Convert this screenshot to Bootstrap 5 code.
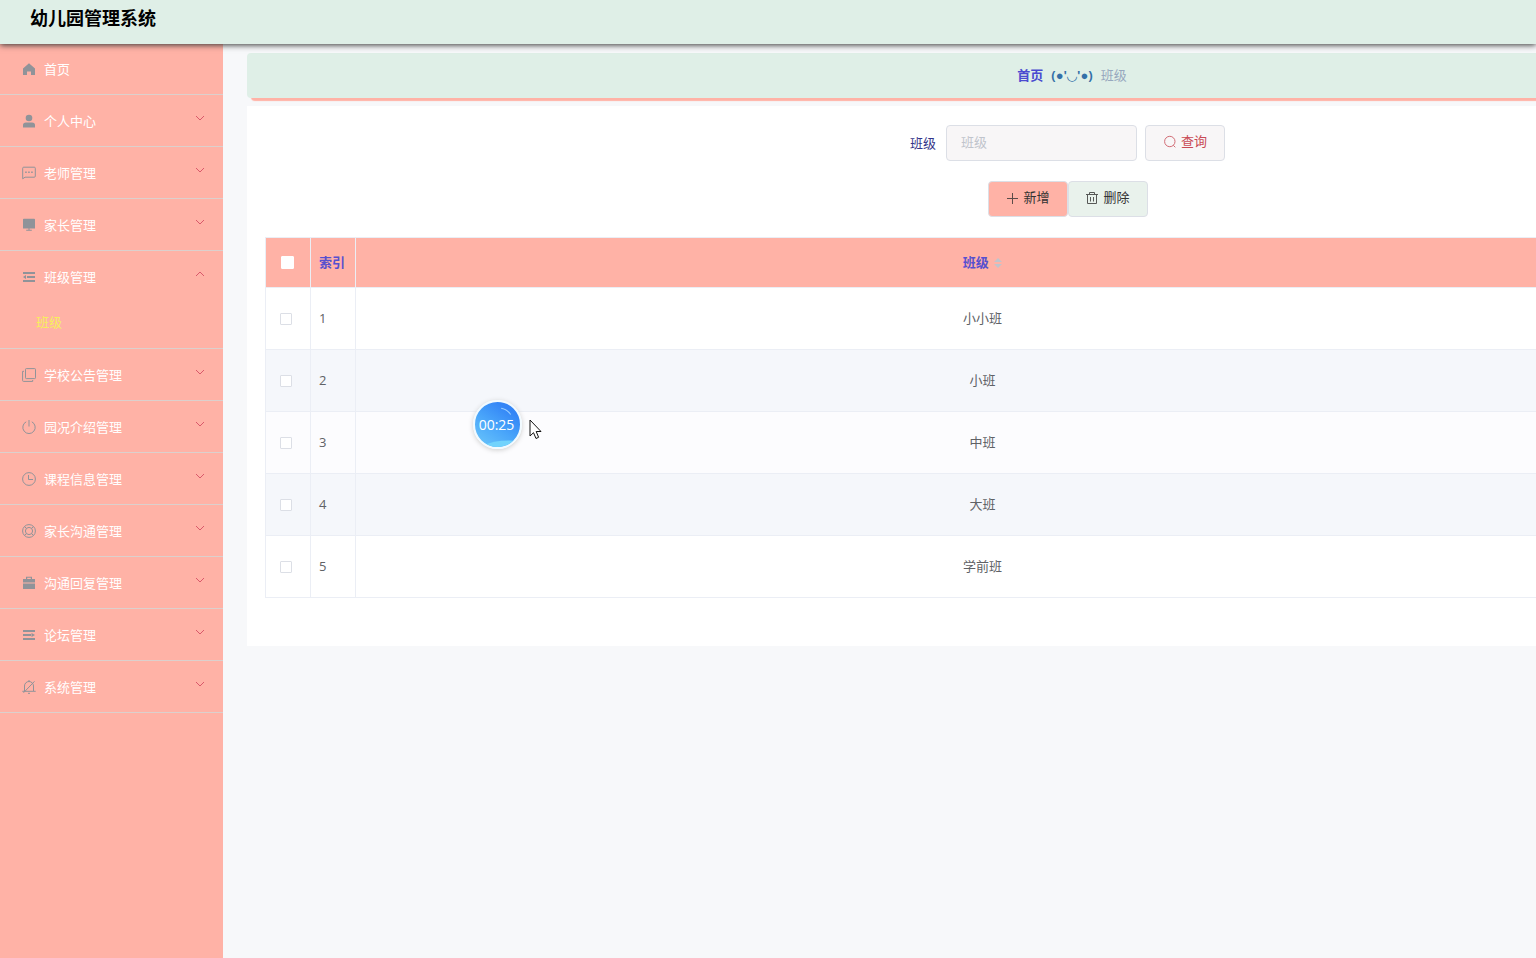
<!DOCTYPE html>
<html lang="zh-CN">
<head>
<meta charset="utf-8">
<meta name="viewport" content="width=device-width, initial-scale=1">
<title>幼儿园管理系统</title>
<link href="https://cdn.jsdelivr.net/npm/bootstrap@5.3.0/dist/css/bootstrap.min.css" rel="stylesheet">
<style>
  :root { --salmon: #ffb2a6; --mint: #dfefe7; --line: #ebeef5; }
  body { font-family: "Open Sans", "Noto Sans CJK SC", sans-serif; font-size: 13px; line-height: 20px; color: #606266; background: #f7f8fa; }
  a { text-decoration: none; }
  .topbar { height: 44px; padding: 4px 30px 12px; background: var(--mint); box-shadow: 0 1px 6px #333; z-index: 2; }
  .topbar h1 { font-size: 18px; line-height: 28px; color: #000; }
  .side { width: 223px; background: var(--salmon); }
  .side li { border-bottom: 1px solid #dcd0cd; }
  .side-link { height: 51px; padding: 0 18px 0 22px; gap: 8px; color: #fff; }
  .side li:first-child .side-link { height: 50px; }
  .side-link .chev { margin: 0 0 5px auto; color: #d9596a; }
  .sub-link { height: 46px; padding: 10px 36px; color: #f6ef5c; }
  .ico { width: 14px; height: 14px; color: #909399; flex: none; fill: none; stroke: currentColor; stroke-width: 1; }
  .ico .solid { fill: currentColor; stroke: none; }
  .chev { width: 10px; height: 10px; fill: none; stroke: currentColor; flex: none; }
  .content-area { min-width: 0; padding: 9px 0 0 24px; }
  /* the work area is wider than the viewport */
  .wide { width: calc(127% + 4px); }
  .crumbs { height: 45px; padding: 0 0 2px 9px; background: var(--mint); border-radius: 4px; box-shadow: 4px 3px 1px var(--salmon); font-weight: 700; gap: 8px; }
  .crumbs a { color: #4a4ad0; }
  .crumbs .face { color: #3470a8; font-family: "Open Sans", "Liberation Sans", "DejaVu Sans", sans-serif; }
  .crumbs .here { color: #97a8be; font-weight: 400; }
  .panel { margin-top: 8px; padding: 19px 18px 48px; background: #fff; }
  .panel label { color: #333389; margin-right: 10px; }
  .search { width: 191px; height: 36px; padding: 0 14px 2px; font-size: 13px; background: #f8f6f7; border-color: #dcdfe6; border-radius: 4px; }
  .search::placeholder { color: #c0c4cc; }
  .tool { width: 80px; height: 36px; padding: 0 0 2px; font-size: 13px; border: 1px solid #dcdfe6; border-radius: 4px; gap: 4px; }
  .tool .ico { color: inherit; opacity: .8; }
  .query { background: #f8f6f7; color: #c94a55; }
  .add { background: var(--salmon); color: #333; }
  .del { background: #e9f2ec; color: #333; }
  .grid-wrap { padding-right: 260px; }
  .grid { table-layout: fixed; border: 1px solid var(--line); }
  .grid th, .grid td { border: 1px solid var(--line); padding: 0 8px 2px; }
  .grid th { height: 50px; background: var(--salmon); color: #5650cf; font-weight: 700; }
  .grid td { height: 62px; }
  .grid .narrow { width: 45px; }
  .grid .name { text-align: center; }
  .grid tbody tr:nth-child(even) { background: #f5f7fb; }
  .grid tbody tr:nth-child(3) { background: #fcfcfe; }
  .grid .form-check-input { width: 12px; height: 12px; margin: 2px 6px 0; border: 1px solid #dcdfe6; border-radius: 1px; display: block; }
  .grid th .form-check-input { width: 13px; height: 13px; margin: 2px 7px 0; border-color: #fff; }
  .sorter { width: 8px; height: 12px; fill: #c0c4cc; margin-left: 2px; }
  .timer { left: 473px; top: 400px; width: 49px; height: 49px; border: 2px solid #f1faff; box-shadow: 0 1px 5px #ccc; background: linear-gradient(35deg, #6cc8fa, #4aa6fa 45%, #3385f6 80%); color: #fff; font-size: 14px; z-index: 3; overflow: hidden; }
  .timer svg { inset: 0; }
  .timer span { margin-right: 2px; }
  .pointer { left: 529px; top: 419px; z-index: 3; }
</style>
</head>
<body class="d-flex flex-column min-vh-100">
<header class="topbar position-relative"><h1 class="m-0 fw-bold">幼儿园管理系统</h1></header>
<div class="d-flex flex-grow-1">
  <nav class="side flex-shrink-0" aria-label="主菜单">
    <ul class="list-unstyled m-0">
      <li><a href="#" class="side-link d-flex align-items-center"><svg class="ico" viewBox="0 0 14 14"><path class="solid" d="M7 1.2 1 6.4V13h4V9.5h4V13h4V6.4z"/></svg>首页</a></li>
      <li><a href="#" class="side-link d-flex align-items-center"><svg class="ico" viewBox="0 0 14 14"><circle class="solid" cx="7" cy="4" r="3.3"/><path class="solid" d="M1 13.5V11q0-2.5 3-2.5h6q3 0 3 2.5v2.5z"/></svg>个人中心<svg class="chev" viewBox="0 0 10 10"><path d="m1 3 4 4 4-4"/></svg></a></li>
      <li><a href="#" class="side-link d-flex align-items-center"><svg class="ico" viewBox="0 0 14 14"><path d="M.7 12.8V2.2q0-1 1-1h10.6q1 0 1 1v8q0 1-1 1H3z"/><path class="solid" d="M3.2 5.5h1.5V7H3.2zm3 0h1.5V7H6.2zm3 0h1.5V7H9.2z"/></svg>老师管理<svg class="chev" viewBox="0 0 10 10"><path d="m1 3 4 4 4-4"/></svg></a></li>
      <li><a href="#" class="side-link d-flex align-items-center"><svg class="ico" viewBox="0 0 14 14"><path class="solid" d="M1 1.5q0-.8.8-.8h10.4q.8 0 .8.8V10.5H1zM6.5 10h1v1.8h2.3v1H4.2v-1h2.3z"/></svg>家长管理<svg class="chev" viewBox="0 0 10 10"><path d="m1 3 4 4 4-4"/></svg></a></li>
      <li><a href="#" class="side-link d-flex align-items-center"><svg class="ico" viewBox="0 0 14 14"><path class="solid" d="M1 2h12v2H1zm4 4h8v2H5zM1 10h12v2H1zM1 7l3-2v4z"/></svg>班级管理<svg class="chev" viewBox="0 0 10 10"><path d="m1 7 4-4 4 4"/></svg></a>
        <a href="#" class="sub-link d-block">班级</a></li>
      <li><a href="#" class="side-link d-flex align-items-center"><svg class="ico" viewBox="0 0 14 14"><rect x="3.5" y=".6" width="10" height="10" rx=".8"/><path d="M2 3.3H.6v9.2q0 .9.9.9h9.2V12"/></svg>学校公告管理<svg class="chev" viewBox="0 0 10 10"><path d="m1 3 4 4 4-4"/></svg></a></li>
      <li><a href="#" class="side-link d-flex align-items-center"><svg class="ico" viewBox="0 0 14 14"><path d="M4.2 1.8a6.2 6.2 0 1 0 5.6 0M7 0v6.5"/></svg>园况介绍管理<svg class="chev" viewBox="0 0 10 10"><path d="m1 3 4 4 4-4"/></svg></a></li>
      <li><a href="#" class="side-link d-flex align-items-center"><svg class="ico" viewBox="0 0 14 14"><circle cx="7" cy="7" r="6.4"/><path d="M6.5 3v4.5H11"/></svg>课程信息管理<svg class="chev" viewBox="0 0 10 10"><path d="m1 3 4 4 4-4"/></svg></a></li>
      <li><a href="#" class="side-link d-flex align-items-center"><svg class="ico" viewBox="0 0 14 14"><circle cx="7" cy="7" r="6.4"/><circle cx="7" cy="7" r="3.6"/><path d="m2.6 2.6 1.8 1.8m5.2 0 1.8-1.8M2.6 11.4l1.8-1.8m5.2 0 1.8 1.8"/></svg>家长沟通管理<svg class="chev" viewBox="0 0 10 10"><path d="m1 3 4 4 4-4"/></svg></a></li>
      <li><a href="#" class="side-link d-flex align-items-center"><svg class="ico" viewBox="0 0 14 14"><path class="solid" d="M1 3h3V.7h6V3h3v3.5H1zm4.2 0h3.6V1.8H5.2zM1 7.5h12V13H1z"/></svg>沟通回复管理<svg class="chev" viewBox="0 0 10 10"><path d="m1 3 4 4 4-4"/></svg></a></li>
      <li><a href="#" class="side-link d-flex align-items-center"><svg class="ico" viewBox="0 0 14 14"><path class="solid" d="M1 2h12v2H1zm0 4h8v2H1zm0 4h12v2H1zM13 7l-3.5-2v4z"/></svg>论坛管理<svg class="chev" viewBox="0 0 10 10"><path d="m1 3 4 4 4-4"/></svg></a></li>
      <li><a href="#" class="side-link d-flex align-items-center"><svg class="ico" viewBox="0 0 14 14"><path d="M2.5 11V6a4.5 4.5 0 0 1 9 0v5M.3 11.3h13.4M6 13.3h2M7 0v1.5M1.5 12.8l11-11.5"/></svg>系统管理<svg class="chev" viewBox="0 0 10 10"><path d="m1 3 4 4 4-4"/></svg></a></li>
    </ul>
  </nav>
  <main class="content-area flex-grow-1 overflow-hidden">
    <div class="wide">
      <nav class="crumbs d-flex align-items-center justify-content-center" aria-label="路径">
        <a href="#">首页</a><span class="face">(●'◡'●)</span><span class="here">班级</span>
      </nav>
      <section class="panel">
        <form class="d-flex justify-content-center align-items-center">
          <label for="className">班级</label>
          <input id="className" type="text" class="form-control search" placeholder="班级">
          <button type="button" class="btn tool query ms-2 d-flex align-items-center justify-content-center"><svg class="ico" viewBox="0 0 14 14"><circle cx="6.8" cy="6.5" r="5.2"/><path d="m10.3 10.3 2 2"/></svg>查询</button>
        </form>
        <div class="d-flex justify-content-center my-3 py-1">
          <button type="button" class="btn tool add d-flex align-items-center justify-content-center"><svg class="ico" viewBox="0 0 14 14"><path d="M7.5 2v11M2 7.5h11"/></svg>新增</button>
          <button type="button" class="btn tool del d-flex align-items-center justify-content-center"><svg class="ico" viewBox="0 0 14 14"><path d="M1 3.5h12M4.5 3.5v-2h5v2M2.5 3.5v9h9v-9M5.5 6v4.5M8.5 6v4.5"/></svg>删除</button>
        </div>
        <div class="grid-wrap">
          <table class="grid w-100">
            <thead><tr>
              <th class="narrow"><input type="checkbox" class="form-check-input" aria-label="全选"></th>
              <th class="narrow">索引</th>
              <th class="name">班级 <svg class="sorter" viewBox="0 0 8 12"><path d="m4 1 4 4H0zM0 7h8l-4 4z"/></svg></th>
            </tr></thead>
            <tbody>
              <tr><td><input type="checkbox" class="form-check-input" aria-label="选择小小班"></td><td>1</td><td class="name">小小班</td></tr>
              <tr><td><input type="checkbox" class="form-check-input" aria-label="选择小班"></td><td>2</td><td class="name">小班</td></tr>
              <tr><td><input type="checkbox" class="form-check-input" aria-label="选择中班"></td><td>3</td><td class="name">中班</td></tr>
              <tr><td><input type="checkbox" class="form-check-input" aria-label="选择大班"></td><td>4</td><td class="name">大班</td></tr>
              <tr><td><input type="checkbox" class="form-check-input" aria-label="选择学前班"></td><td>5</td><td class="name">学前班</td></tr>
            </tbody>
          </table>
        </div>
      </section>
    </div>
  </main>
</div>
<div class="timer position-absolute rounded-circle d-flex align-items-center justify-content-center">
  <svg class="position-absolute" viewBox="0 0 43 43"><path d="M8 42q10-6 30-5v8H8z" fill="#72d3fc"/><path d="M25 6q6 1 9 6" fill="none" stroke="#9bd0ff" stroke-width="1"/></svg>
  <span class="position-relative">00:25</span>
</div>
<svg class="pointer position-absolute" width="13" height="21" viewBox="0 0 13 21"><path d="M1 1v16l3.5-3.3L7 19.5l2.6-1.2L7.2 12.5H12z" fill="#fff" stroke="#111"/></svg>
<script src="https://cdn.jsdelivr.net/npm/bootstrap@5.3.0/dist/js/bootstrap.bundle.min.js"></script>
</body>
</html>
